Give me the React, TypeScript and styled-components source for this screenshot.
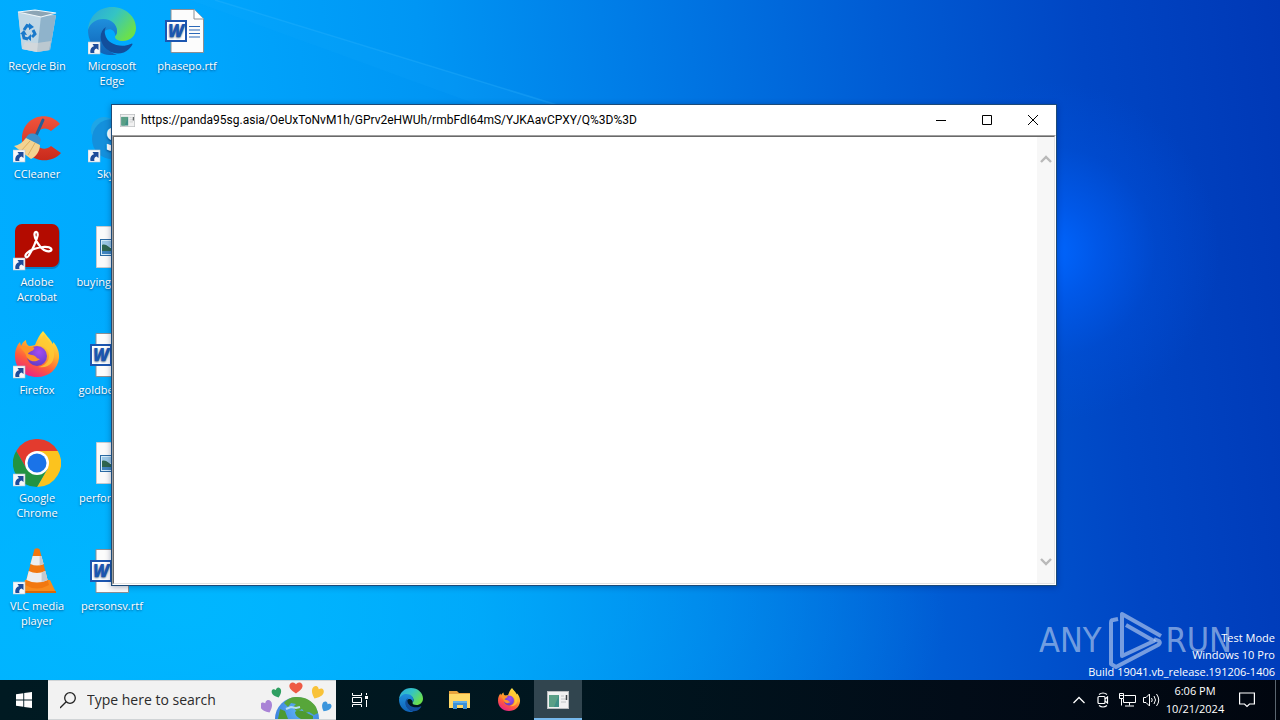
import React from "react";
import styled, { createGlobalStyle } from "styled-components";

const uiFont = '"Open Sans", "Noto Sans", sans-serif';

const GlobalStyle = createGlobalStyle`
  *, *::before, *::after { box-sizing: border-box; }
  body { margin: 0; font-family: ${uiFont}; font-size: 11px; }
  button, input { font: inherit; color: inherit; border: 0; padding: 0; margin: 0; background: none; }
  svg { display: block; }
`;

const Screen = styled.div`
  display: flex;
  flex-direction: column;
  min-height: 100vh;
`;

const Desktop = styled.main`
  position: relative;
  flex: 1;
  overflow: hidden;
  background:
    radial-gradient(circle 170px at 82% 37%, rgba(0, 102, 255, 1) 0%, rgba(0, 94, 246, 0.7) 28%, rgba(0, 84, 228, 0.3) 62%, rgba(0, 80, 220, 0) 100%),
    radial-gradient(ellipse 60% 45% at 14% 90%, rgba(0, 184, 255, 0.9) 0%, rgba(0, 184, 255, 0) 100%),
    linear-gradient(84deg, #00aeff 0%, #00a8fe 18%, #0096f4 36%, #007be6 52%, #005cd4 70%, #0046c4 85%, #0038b6 100%);
`;

const Beam = styled.svg`
  position: absolute;
  inset: 0;
  width: 100%;
  height: 100%;
`;

const IconGrid = styled.ul`
  position: relative;
  display: grid;
  grid-template-rows: repeat(6, 108px);
  grid-auto-flow: column;
  grid-auto-columns: 75px;
  margin: 0;
  padding: 0;
  list-style: none;
`;

const DesktopItem = styled.li`
  display: flex;
`;

const Shortcut = styled.button`
  display: flex;
  flex: 1;
  flex-direction: column;
  align-items: center;
  gap: 3px;
  min-width: 0;
  padding: 7px 1px 0 0;
  color: #fff;
  line-height: 15px;
  text-align: center;
  text-shadow: 0 1px 2px rgba(0, 40, 90, 0.7);
`;

const Branding = styled.div`
  position: absolute;
  right: 48px;
  bottom: 10px;
  display: flex;
  align-items: center;
  gap: 3px;
  color: rgba(190, 210, 240, 0.62);
  font-family: "DejaVu Sans Condensed", sans-serif;
  font-size: 34px;
  line-height: 60px;
`;

const BuildInfo = styled.div`
  position: absolute;
  right: 5px;
  bottom: 0;
  color: #fff;
  line-height: 17px;
  text-align: right;
`;

const Window = styled.section`
  position: absolute;
  top: 104px;
  right: 223px;
  bottom: 94px;
  left: 111px;
  display: flex;
  flex-direction: column;
  border: 1px solid #1c4a78;
  background: #fff;
  box-shadow: 0 1px 6px rgba(0, 20, 70, 0.35);
`;

const TitleBar = styled.header`
  display: flex;
  align-items: center;
  height: 30px;
  padding-left: 8px;
`;

const Title = styled.h1`
  flex: 1;
  min-width: 0;
  margin: 0 0 0 6px;
  overflow: hidden;
  color: #000;
  font-family: Roboto, ${uiFont};
  font-size: 12px;
  font-weight: 400;
  line-height: 16px;
  white-space: nowrap;
`;

const CaptionButton = styled.button`
  display: grid;
  place-items: center;
  width: 46px;
  height: 30px;
`;

const ClientFrame = styled.div`
  display: flex;
  flex: 1;
  border: 1px solid;
  border-color: #a0a0a0 #fff #fff #a0a0a0;
`;

const Client = styled.div`
  display: flex;
  flex: 1;
  justify-content: flex-end;
  border: 1px solid;
  border-color: #696969 #e3e3e3 #e3e3e3 #696969;
`;

const ScrollBar = styled.div`
  display: flex;
  flex-direction: column;
  justify-content: space-between;
  width: 17px;
  padding: 13px 0;
  background: #f7f7f7;
`;

const ScrollButton = styled.button`
  display: grid;
  place-items: center;
  height: 17px;
`;

const TaskBar = styled.footer`
  display: flex;
  height: 40px;
  background: linear-gradient(90deg, #001a22 0%, #00161f 45%, #020c18 75%, #01060f 100%);
  color: #fff;
`;

const TaskButton = styled.button<{ $active?: boolean; $narrow?: boolean }>`
  display: grid;
  place-items: center;
  width: ${(p) => (p.$narrow ? 40 : 48)}px;
  background: ${(p) => (p.$active ? "#31454f" : "transparent")};
  box-shadow: ${(p) => (p.$active ? "inset 0 -2px #76b9ed" : "none")};
`;

const SearchBox = styled.label`
  display: flex;
  align-items: center;
  width: 288px;
  padding: 0 1px 0 12px;
  border: 1px solid #d0d4d6;
  border-width: 1px 0;
  background: #f2f2f2;
  color: #222;
`;

const SearchInput = styled.input`
  flex: 1;
  min-width: 0;
  margin-left: 11px;
  font-size: 14px;
  line-height: 20px;
  outline: 0;
  &::placeholder { color: #2b2b2b; opacity: 1; }
`;

const RunningApps = styled.div`
  display: flex;
  gap: 1px;
  margin-left: 3px;
`;

const Tray = styled.div`
  display: flex;
  margin-left: auto;
`;

const TrayButton = styled.button`
  display: grid;
  place-items: center;
  width: 24px;
`;

const Clock = styled.button`
  width: 64px;
  line-height: 18px;
  text-align: center;
`;

const ShowDesktop = styled.button`
  width: 5px;
  margin-left: 8px;
  border-left: 1px solid #5b6670;
`;

const ShortcutArrow = () => (
  <g>
    <rect x="0" y="35" width="12" height="12" fill="#f6f8fa" stroke="#b9c4cf" strokeWidth="0.6" />
    <path d="M2.500 46c-.8-3.800 1-6.200 3.500-6.800L4.500 37h6v6L8.600 41.400c-1.900.4-2.800 1.900-2.200 4.600Z" fill="#1e4c9a" />
  </g>
);

const RecycleIcon = () => (
  <svg width="48" height="48" viewBox="0 0 48 48">
    <path d="M5 5 43 8 37 43 24 45 9 42Z" fill="#c3dbe9" />
    <path d="M5 5 28 9 24 45 9 42Z" fill="#c0d6e4" opacity=".9" />
    <path d="M28 9 43 8 37 43 24 45Z" fill="#8fb3cb" />
    <path d="M5 5 22 3 43 6 28 10Z" fill="#8ca5b5" stroke="#f1f7fa" strokeWidth="1.2" />
    <path d="M12 35 24 36 38 34 36 43 24 45 9 42Z" fill="#e0d9d6" opacity=".55" />
    <g fill="none" stroke="#1979cb" strokeWidth="3">
      <path d="M11 23l3-4.500 3 1" />
      <path d="M20 23l2 4-3 3" />
      <path d="M15 32l-4-1-1-4" />
    </g>
    <path d="M16 16l5 4-5 3ZM18 27v7l-4-3ZM7 27l4-4 3 5Z" fill="#1979cb" />
  </svg>
);

const EdgeIcon = ({ size = 48, arrow = false }: { size?: number; arrow?: boolean }) => {
  const id = `edge${size}`;
  return (
    <svg width={size} height={size} viewBox="0 0 48 48">
      <defs>
        <linearGradient id={`${id}a`} x1="0" y1="0" x2="1" y2=".6">
          <stop offset="0" stopColor="#2aa5dc" /><stop offset=".5" stopColor="#34c4c4" /><stop offset="1" stopColor="#6be04b" />
        </linearGradient>
        <linearGradient id={`${id}b`} x1="0" y1="0" x2="0" y2="1">
          <stop offset="0" stopColor="#1f8fdc" /><stop offset="1" stopColor="#0f62b6" />
        </linearGradient>
      </defs>
      <path d="M0 23C1 9 11 0 24 0c14 0 24 10 24 21 0 8-6 13-13 13-5 0-8-2-8-4 0-1.500 2-2 2-6 0-5-5-10-13-10C9 14 2 18 0 23Z" fill={`url(#${id}a)`} />
      <path d="M0 23c2-7 8-11 15-11 9 0 14 6 14 12 0 2-.6 3.500-1.500 5C27 22 20 20 16 25c-5 7 0 19 13 22.500C13 51 0 39 0 23Z" fill={`url(#${id}b)`} />
      <path d="M18 20c-5 3-7 10-4 16 5 11 19 14 27 6 1.600-1.600 3-3.500 3.600-5-.4-1-1-.6-2-.1C34 41 19 38 17 27c-.6-3 0-5 1-7Z" fill="#124e9c" />
      {arrow && <ShortcutArrow />}
    </svg>
  );
};

const WordIcon = () => (
  <svg width="48" height="48" viewBox="0 0 48 48">
    <path d="M8 2.500h23l9.500 9.500v33.500H8Z" fill="#fcfcfc" stroke="#8d8f93" />
    <path d="M31 2.500V12h9.500" fill="#fff" stroke="#8d8f93" />
    <path d="M26 19.500h11M26 23h11M26 26.500h11M26 30h11" stroke="#2b68b8" strokeWidth="1.200" />
    <rect x="3" y="14" width="20" height="20" fill="#fff" stroke="#1c56b0" strokeWidth="2" />
    <text x="13" y="30" textAnchor="middle" fontFamily="Open Sans, sans-serif" fontSize="17" fontStyle="italic" fontWeight="800" fill="#1c56b0">W</text>
  </svg>
);

const PictureIcon = () => (
  <svg width="48" height="48" viewBox="0 0 48 48">
    <path d="M8.500 3.500h31v41h-31Z" fill="#fafafa" stroke="#c8cbcf" />
    <rect x="12.500" y="16.500" width="23" height="16" fill="#d5ecf9" stroke="#2c6ba4" />
    <path d="M14 18h20v6H14Z" fill="#9cc8e6" />
    <path d="M14 22c4-2 7 3 11 4s6 1 9 1v4H14Z" fill="#2f6650" />
    <path d="M14 28h20v3H14Z" fill="#4084bf" />
  </svg>
);

const CCleanerIcon = () => (
  <svg width="48" height="48" viewBox="0 0 48 48">
    <defs>
      <linearGradient id="cc" x1="0" y1="0" x2="0" y2="1">
        <stop offset="0" stopColor="#f0543c" /><stop offset="1" stopColor="#c92a1c" />
      </linearGradient>
    </defs>
    <path d="M47 9 38 16c-6-6-16-1-16 8 0 8 9 13 16 7l10 7C36 52 9 45 9 24 9 2 34-6 47 9Z" fill="url(#cc)" />
    <path d="M30 5 22 23" stroke="#245f96" strokeWidth="3" strokeLinecap="round" />
    <path d="M15 20c4-3 11-1 13 5l-3 7-14-7Z" fill="#3a8fcb" />
    <path d="M13 23 27 30c0 6-4 12-9 14L1 31c5-1 9-4 12-8Z" fill="#f3d391" />
    <path d="M17 26 8 36M22 28 15 40" stroke="#dcae61" />
    <ShortcutArrow />
  </svg>
);

const SkypeIcon = () => (
  <svg width="48" height="48" viewBox="0 0 48 48">
    <circle cx="16" cy="15" r="13" fill="#1fa6e6" />
    <circle cx="32" cy="32" r="13" fill="#0c6fc6" />
    <circle cx="24" cy="24" r="20" fill="#1490dc" />
    <text x="27" y="36" textAnchor="middle" fontFamily="Open Sans, sans-serif" fontSize="34" fontWeight="800" fill="#fff">S</text>
    <ShortcutArrow />
  </svg>
);

const AcrobatIcon = () => (
  <svg width="48" height="48" viewBox="0 0 48 48">
    <rect x="2" y="2" width="45" height="44" rx="8" fill="#083a70" opacity=".35" />
    <rect x="2" y="1" width="44" height="43" rx="7" fill="#b30b00" />
    <path d="M13 34c-2-2 2-6 8-8 7-2.500 15-3 17-.5s-3 4-7 1.500C26 24 21 15 21.500 11c.5-3.500 4-2.500 3 2C23 19 18 29 15.500 33c-1 1.500-2 1.600-2.500 1Z" fill="none" stroke="#fff" strokeWidth="2.200" />
    <ShortcutArrow />
  </svg>
);

const FirefoxIcon = ({ size = 48, arrow = false }: { size?: number; arrow?: boolean }) => {
  const id = `fox${size}`;
  return (
    <svg width={size} height={size} viewBox="0 0 48 48">
      <defs>
        <linearGradient id={`${id}a`} x1=".8" y1="0" x2=".3" y2="1">
          <stop offset="0" stopColor="#fff04a" /><stop offset=".4" stopColor="#ffb02e" /><stop offset=".7" stopColor="#ff5a3c" /><stop offset="1" stopColor="#e8218b" />
        </linearGradient>
        <radialGradient id={`${id}b`} cx=".6" cy=".3" r=".8">
          <stop offset="0" stopColor="#a44cf0" /><stop offset="1" stopColor="#5a3bc4" />
        </radialGradient>
      </defs>
      <path d="M30 0c3 4 6 7 8 10 1 1 1 2 1.500 3l1-2c4 5 6 10 5.500 16C45 38 36 46 24 46 11 46 2 37 2 25c0-6 2-11 5-14l1 4c1-3 3-5 5-6 0 3 1 5 3 6 2 0 4-.5 6-1 2-5 4-10 8-14Z" fill={`url(#${id}a)`} />
      <circle cx="24" cy="25" r="10" fill={`url(#${id}b)`} />
      <path d="M7 16c4-2 8 0 12 0 2 0 3 1 2 2-2 3-5 2-6 5 2 0 2 1 4 1 4 0 4 4 8 4-6 5-13 1-14-4-2-4-4-5-6-8Z" fill="#ff9527" />
      <path d="M24 15c7-1 12 4 12 10 0 5-4 10-11 11 12 2 17-6 16-15-1-7-6-11-10-18-2 4-5 8-7 12Z" fill="#ffcb33" opacity=".8" />
      {arrow && <ShortcutArrow />}
    </svg>
  );
};

const ChromeIcon = () => (
  <svg width="48" height="48" viewBox="0 0 48 48">
    <path d="M3.200 12A24 24 0 0 1 44.800 12H24L13.600 30Z" fill="#e33b2e" />
    <path d="M44.800 12A24 24 0 0 1 24 48L34.400 30 24 12Z" fill="#fcc31e" />
    <path d="M24 48A24 24 0 0 1 3.200 12L13.600 30H34.400Z" fill="#229342" />
    <circle cx="24" cy="24" r="12" fill="#fff" />
    <circle cx="24" cy="24" r="9.500" fill="#1a73e8" />
    <ShortcutArrow />
  </svg>
);

const VlcIcon = () => (
  <svg width="48" height="48" viewBox="0 0 48 48">
    <path d="M12 33h25l6 12.500H8Z" fill="#f98b1c" />
    <path d="M8 44h35v2H8Z" fill="#d86808" />
    <path d="M21.500 2q2.500-1.500 5 0l9.500 36q-12 7-24 0Z" fill="#f2780f" />
    <path d="M19.600 9h8.800l2.200 8q-6.600 3-13.200 0ZM15.700 24q8.300 4 16.600 0l2.300 9q-10.600 5-21.200 0Z" fill="#eceef0" />
    <path d="M28.400 9l2.200 8q-2 1-4 1.200V9ZM32.300 24l2.300 9q-3 1.500-6 2V25.500Z" fill="#c5c9ce" />
    <ShortcutArrow />
  </svg>
);

const AppIcon = ({ width, height }: { width: number; height: number }) => (
  <svg width={width} height={height} viewBox="0 0 22 18" preserveAspectRatio="none">
    <rect x=".5" y=".5" width="21" height="17" fill="#f1f1f1" stroke="#b9bcbe" />
    <rect x="2" y="4" width="10" height="12" fill="#3f8f86" />
    <path d="M2 4h10l-5 12H2Z" fill="#5a9f86" />
    <path d="M14 5h3M14 8h5M14 11h5" stroke="#c0c4c6" />
    <path d="M19.500 4v5" stroke="#41474a" strokeWidth="1.500" />
  </svg>
);

const ExplorerIcon = () => (
  <svg width="24" height="24" viewBox="0 0 24 24">
    <path d="M1 3h8l2 2h11v15H1Z" fill="#e8a33d" />
    <path d="M1 6h21v14H1Z" fill="#ffd867" />
    <path d="M5 13h14v8h-4v-4H9v4H5Z" fill="#3c91d8" />
    <path d="M5 13h14v2H5Z" fill="#61b0ea" />
  </svg>
);

const heart = "M0 6C-9 0-6-6-3-6-1-6 0-4 0-4S1-6 3-6C6-6 9 0 0 6Z";

const EarthDoodle = () => (
  <svg width="74" height="38" viewBox="0 0 74 38">
    <defs>
      <radialGradient id="earth" cx=".55" cy=".3" r=".8">
        <stop offset="0" stopColor="#5fb3f5" /><stop offset="1" stopColor="#2f6fd6" />
      </radialGradient>
    </defs>
    <circle cx="36" cy="38" r="22" fill="url(#earth)" />
    <path d="M23 22c4-5 8-6 13-6 9 0 15 4 19 10l2 6-4 2-5-3-4 1-3-4-5 3-4-5 3-3-5-1-3 4Z" fill="#57a63a" />
    <path d="M34 31c4-3 9-1 12 1l6 3v3H40c-4-2-6-4-6-7ZM19 28l5 2 3 8H17Z" fill="#4d9a32" />
    <path d="M25 28l5-2 5 1 4-1" fill="none" stroke="#b5def8" strokeWidth="2" />
    <path d={heart} transform="translate(35 7) scale(1.100 .9)" fill="#ee5a45" />
    <path d={heart} transform="translate(16 12) rotate(-20) scale(.8)" fill="#2f9f61" />
    <path d={heart} transform="translate(56 12) rotate(25)" fill="#f8c238" />
    <path d={heart} transform="translate(6 26) rotate(-25)" fill="#a983d6" />
    <path d={heart} transform="translate(65 26) rotate(30) scale(.8)" fill="#3b95dc" />
  </svg>
);

const shortcuts: { label: React.ReactNode; icon: React.ReactNode }[] = [
  { label: "Recycle Bin", icon: <RecycleIcon /> },
  { label: "CCleaner", icon: <CCleanerIcon /> },
  { label: <>Adobe<br />Acrobat</>, icon: <AcrobatIcon /> },
  { label: "Firefox", icon: <FirefoxIcon arrow /> },
  { label: <>Google<br />Chrome</>, icon: <ChromeIcon /> },
  { label: <>VLC media<br />player</>, icon: <VlcIcon /> },
  { label: <>Microsoft<br />Edge</>, icon: <EdgeIcon arrow /> },
  { label: "Skype", icon: <SkypeIcon /> },
  { label: "buyingday.jpg", icon: <PictureIcon /> },
  { label: "goldberlin.rtf", icon: <WordIcon /> },
  { label: "performs.jpg", icon: <PictureIcon /> },
  { label: "personsv.rtf", icon: <WordIcon /> },
  { label: "phasepo.rtf", icon: <WordIcon /> },
];

const Chevron = ({ down = false }: { down?: boolean }) => (
  <svg width="12" height="8" viewBox="0 0 12 8">
    <path d={down ? "M1 1l5 5 5-5" : "M1 7l5-5 5 5"} fill="none" stroke="#b9b9b9" strokeWidth="2.400" />
  </svg>
);

export default function App() {
  return (
    <Screen>
      <GlobalStyle />
      <Desktop>
        <Beam viewBox="0 0 1280 680" preserveAspectRatio="none" aria-hidden="true">
          <path d="M190 0h25L580 112v30Z" fill="#20b4ff" opacity=".1" />
          <path d="M215 0 580 112" stroke="#3dbdff" strokeWidth="1.500" opacity=".25" />
        </Beam>
        <IconGrid>
          {shortcuts.map((s, i) => (
            <DesktopItem key={i}>
              <Shortcut>
                {s.icon}
                <span>{s.label}</span>
              </Shortcut>
            </DesktopItem>
          ))}
        </IconGrid>

        <Branding>
          <span>ANY</span>
          <svg width="58" height="60" viewBox="0 0 58 60" fill="none" stroke="currentColor" strokeWidth="4" strokeLinejoin="round">
            <path d="M14 9 9 10Q7 10 7 13V54L12 57 54 35Q57 33 55 31L50 29" />
            <path d="M57 26 18 4V46L50 31 22 15" />
          </svg>
          <span>RUN</span>
        </Branding>
        <BuildInfo>
          <div>Test Mode</div>
          <div>Windows 10 Pro</div>
          <div>Build 19041.vb_release.191206-1406</div>
        </BuildInfo>

        <Window>
          <TitleBar>
            <AppIcon width={15} height={13} />
            <Title>https://panda95sg.asia/OeUxToNvM1h/GPrv2eHWUh/rmbFdI64mS/YJKAavCPXY/Q%3D%3D</Title>
            <CaptionButton aria-label="Minimize">
              <svg width="10" height="10"><path d="M0 5.500h10" stroke="#000" /></svg>
            </CaptionButton>
            <CaptionButton aria-label="Maximize">
              <svg width="10" height="10"><path d="M.5.500h9v9h-9Z" stroke="#000" fill="none" /></svg>
            </CaptionButton>
            <CaptionButton aria-label="Close">
              <svg width="10" height="10"><path d="M0 0l10 10M10 0 0 10" stroke="#000" /></svg>
            </CaptionButton>
          </TitleBar>
          <ClientFrame>
            <Client>
              <ScrollBar>
                <ScrollButton aria-label="Scroll up"><Chevron /></ScrollButton>
                <ScrollButton aria-label="Scroll down"><Chevron down /></ScrollButton>
              </ScrollBar>
            </Client>
          </ClientFrame>
        </Window>
      </Desktop>

      <TaskBar>
        <TaskButton aria-label="Start">
          <svg width="16" height="16" viewBox="0 0 16 16" fill="#fff">
            <path d="M0 2.200 7.300 1.200V7.600H0ZM8.200 1.100 16 0V7.600H8.200ZM0 8.400H7.300V14.800L0 13.800ZM8.200 8.400H16V16L8.200 14.900Z" />
          </svg>
        </TaskButton>
        <SearchBox>
          <svg width="16" height="17" viewBox="0 0 16 17" fill="none" stroke="#222" strokeWidth="1.300">
            <circle cx="10" cy="6" r="5.300" />
            <path d="M6.200 9.800 0 16" />
          </svg>
          <SearchInput type="text" placeholder="Type here to search" aria-label="Type here to search" />
          <EarthDoodle />
        </SearchBox>
        <TaskButton aria-label="Task View">
          <svg width="18" height="16" viewBox="0 0 18 16" fill="none" stroke="#fff">
            <path d="M1.500 1v2.500h9V1M1.500 15v-2.500h9V15M1.500 5.500h9v5h-9ZM15.500 1v2M15.500 8v7" />
            <path d="M14 4h3v3h-3Z" fill="#fff" stroke="none" />
          </svg>
        </TaskButton>
        <RunningApps>
          <TaskButton aria-label="Microsoft Edge"><EdgeIcon size={24} /></TaskButton>
          <TaskButton aria-label="File Explorer"><ExplorerIcon /></TaskButton>
          <TaskButton aria-label="Firefox"><FirefoxIcon size={24} /></TaskButton>
          <TaskButton $active aria-label="panda95sg.asia"><AppIcon width={22} height={18} /></TaskButton>
        </RunningApps>
        <Tray>
          <TrayButton aria-label="Show hidden icons">
            <svg width="12" height="8" fill="none" stroke="#fff" strokeWidth="1.300"><path d="M.5 7 6 1.500 11.500 7" /></svg>
          </TrayButton>
          <TrayButton aria-label="Meet Now">
            <svg width="14" height="16" viewBox="0 0 14 16" fill="none" stroke="#fff" strokeWidth="1.200">
              <rect x="2" y="4.500" width="7" height="7" rx="1" />
              <path d="M9 7l2.500-2v6L9 9M3 2.500Q7-.5 11 2.500M3 13.500q4 3 8 0" />
            </svg>
          </TrayButton>
          <TrayButton aria-label="Network">
            <svg width="17" height="14" viewBox="0 0 17 14" fill="none" stroke="#fff">
              <path d="M5.500 2.500h11v7h-12V6M.5.500h4v5h-4ZM2.500 5.500v7M10.500 9.500v3M6 13h9M.5 2.500h4" />
            </svg>
          </TrayButton>
          <TrayButton aria-label="Volume">
            <svg width="17" height="14" viewBox="0 0 17 14" fill="none" stroke="#fff">
              <path d="M.5 4.500h2.500L6.500 1v12L3 9.500H.5ZM8.500 5q1.500 2 0 4M11 3q3 4 0 8M13.500 1q4.500 6 0 12" />
            </svg>
          </TrayButton>
          <Clock>
            <div>6:06 PM</div>
            <div>10/21/2024</div>
          </Clock>
          <TaskButton $narrow aria-label="Notifications">
            <svg width="16" height="16" viewBox="0 0 16 16" fill="none" stroke="#fff" strokeWidth="1.200">
              <path d="M.6 1h14.800v11H10.500L8 14.500 5.500 12H.6Z" />
            </svg>
          </TaskButton>
          <ShowDesktop aria-label="Show desktop" />
        </Tray>
      </TaskBar>
    </Screen>
  );
}
